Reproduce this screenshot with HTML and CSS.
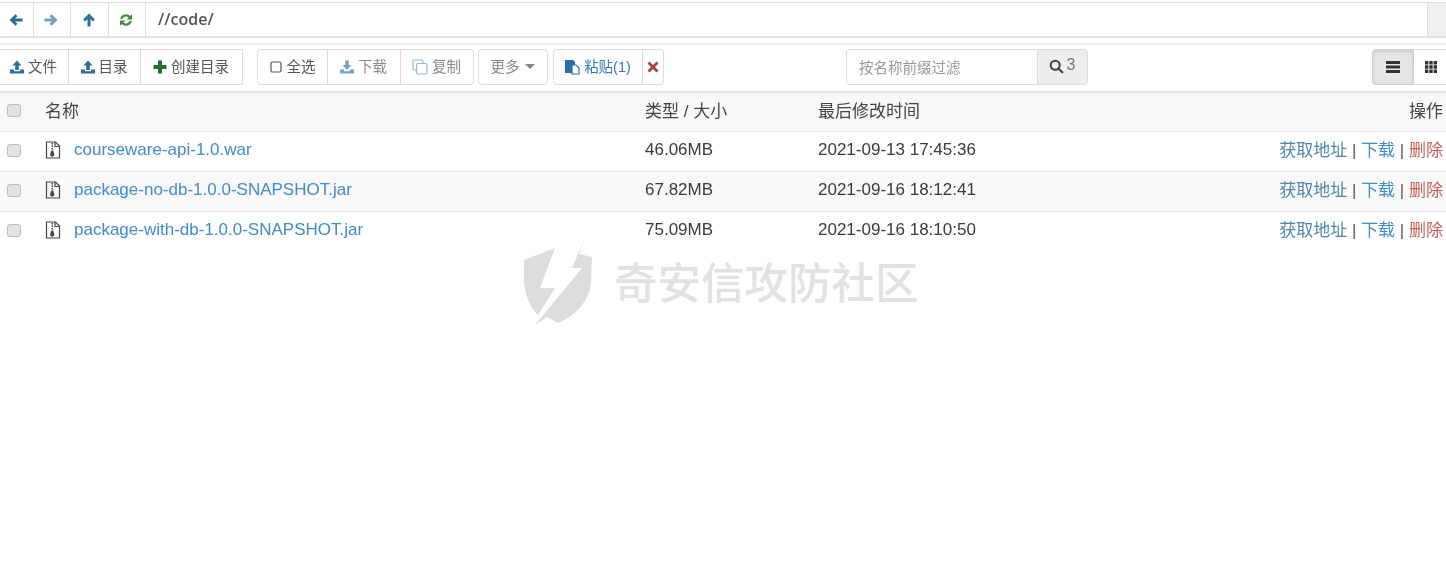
FILE: index.html
```html
<!DOCTYPE html>
<html lang="zh-CN">
<head>
    <meta charset="UTF-8">
    <title>文件管理</title>
    <link rel="stylesheet" href="styles.css">
</head>
<body>
    <div class="address-bar">
        <button class="nav-btn w34"><svg class="icon teal" viewBox="0 0 14 14"><path d="M0.5 7 6.5 1.2 8.5 3.2 6 5.5H13.5V8.5H6L8.5 10.8 6.5 12.8Z"/></svg></button>
        <button class="nav-btn w37"><svg class="icon teal faded" viewBox="0 0 14 14"><path d="M13.5 7 7.5 1.2 5.5 3.2 8 5.5H.5V8.5H8L5.5 10.8 7.5 12.8Z"/></svg></button>
        <button class="nav-btn w38"><svg class="icon teal" viewBox="0 0 14 14"><path d="M7 .5 12.8 6.5 10.8 8.5 8.5 6V13.5H5.5V6L3.2 8.5 1.2 6.5Z"/></svg></button>
        <button class="nav-btn w37"><svg class="icon-refresh" viewBox="0 0 14 14"><path d="M1.2 5.8A6 6 0 0 1 11.2 3L13 1.2V6.6H7.6L9.6 4.6A3.6 3.6 0 0 0 3.6 6ZM12.8 8.2A6 6 0 0 1 2.8 11L1 12.8V7.4H6.4L4.4 9.4A3.6 3.6 0 0 0 10.4 8Z"/></svg></button>
        <div class="path-input">//code/</div>
        <button class="nav-btn go-btn"></button>
    </div>

    <div class="toolbar">
        <div class="btn-group first">
            <button class="btn w70"><svg class="icon teal" viewBox="0 0 14 14"><path d="M7 .5 11.5 5.5H8.8V10H5.2V5.5H2.5ZM0 9.5H4V11.2H10V9.5H14V13.5H0Z"/></svg>文件</button>
            <button class="btn w72"><svg class="icon teal" viewBox="0 0 14 14"><path d="M7 .5 11.5 5.5H8.8V10H5.2V5.5H2.5ZM0 9.5H4V11.2H10V9.5H14V13.5H0Z"/></svg>目录</button>
            <button class="btn w102"><svg class="icon green-dark" viewBox="0 0 14 14"><path d="M5 .5H9V5H13.5V9H9V13.5H5V9H.5V5H5Z"/></svg>创建目录</button>
        </div>
        <div class="btn-group">
            <button class="btn w71"><svg class="icon-check" viewBox="0 0 14 14"><rect x="2" y="2" width="10" height="10" rx="1.5"/></svg>全选</button>
            <button class="btn w73 disabled"><svg class="icon teal-light" viewBox="0 0 14 14"><path d="M5.2 .5H8.8V5H11.5L7 10 2.5 5H5.2ZM0 9.5H4V11.2H10V9.5H14V13.5H0Z"/></svg>下载</button>
            <button class="btn w73 disabled"><svg class="icon-copy" viewBox="0 0 16 16"><rect x="1" y="1" width="10" height="10" rx="1.5"/><rect x="4.5" y="4.5" width="10.5" height="10.5" rx="1.5"/></svg>复制</button>
        </div>
        <div class="btn-group tight">
            <button class="btn w70 disabled">更多<span class="caret"></span></button>
        </div>
        <div class="btn-group gap5">
            <button class="btn w90 paste"><svg class="icon-paste" viewBox="0 0 16 16"><path class="clip" d="M1 1H9L11 3V6H8V14H1Z"/><path class="page" d="M8 6H12L15 9V15H8Z"/></svg>粘贴(1)</button>
            <button class="btn w21 cancel"><svg class="icon red" viewBox="0 0 14 14"><path d="M3.5 1.5 7 5 10.5 1.5 12.5 3.5 9 7 12.5 10.5 10.5 12.5 7 9 3.5 12.5 1.5 10.5 5 7 1.5 3.5Z"/></svg></button>
        </div>
        <div class="search-group">
            <div class="search-input">按名称前缀过滤</div>
            <button class="btn search-btn"><svg class="icon-search" viewBox="0 0 14 14"><circle cx="5.8" cy="5.8" r="4.2"/><path d="M9 9 13 13"/></svg>3</button>
        </div>
        <div class="view-group">
            <button class="btn view-btn active"><svg class="icon dark" viewBox="0 0 14 14"><path d="M0 1H14V4H0ZM0 5.5H14V8.5H0ZM0 10H14V13H0Z"/></svg></button>
            <button class="btn view-btn"><svg class="icon dark" viewBox="0 0 14 14"><path d="M1 1H4.4V4.4H1ZM5.3 1H8.7V4.4H5.3ZM9.6 1H13V4.4H9.6ZM1 5.3H4.4V8.7H1ZM5.3 5.3H8.7V8.7H5.3ZM9.6 5.3H13V8.7H9.6ZM1 9.6H4.4V13H1ZM5.3 9.6H8.7V13H5.3ZM9.6 9.6H13V13H9.6Z"/></svg></button>
        </div>
    </div>

    <div class="row head">
        <span class="check"></span>
        <span class="name">名称</span>
        <span class="size">类型 / 大小</span>
        <span class="time">最后修改时间</span>
        <span class="ops">操作</span>
    </div>
    <div class="row">
        <span class="check"></span>
        <span class="name"><svg class="zip" viewBox="0 0 16 18"><path d="M1.5 1H10.5L14.5 5V17H1.5ZM10 1V5.5H14.5"/><path class="fill" d="M6.5 2H8V3.5H6.5ZM6.5 4.5H8V6H6.5ZM6.5 7H8V8.5H6.5ZM6.3 9.5H8.2L9.4 13.5A2 2 0 0 1 5.1 13.5Z"/></svg><a>courseware-api-1.0.war</a></span>
        <span class="size">46.06MB</span>
        <span class="time">2021-09-13 17:45:36</span>
        <span class="ops"><a class="addr">获取地址</a> | <a>下载</a> | <a class="del">删除</a></span>
    </div>
    <div class="row shaded">
        <span class="check"></span>
        <span class="name"><svg class="zip" viewBox="0 0 16 18"><path d="M1.5 1H10.5L14.5 5V17H1.5ZM10 1V5.5H14.5"/><path class="fill" d="M6.5 2H8V3.5H6.5ZM6.5 4.5H8V6H6.5ZM6.5 7H8V8.5H6.5ZM6.3 9.5H8.2L9.4 13.5A2 2 0 0 1 5.1 13.5Z"/></svg><a>package-no-db-1.0.0-SNAPSHOT.jar</a></span>
        <span class="size">67.82MB</span>
        <span class="time">2021-09-16 18:12:41</span>
        <span class="ops"><a class="addr">获取地址</a> | <a>下载</a> | <a class="del">删除</a></span>
    </div>
    <div class="row last">
        <span class="check"></span>
        <span class="name"><svg class="zip" viewBox="0 0 16 18"><path d="M1.5 1H10.5L14.5 5V17H1.5ZM10 1V5.5H14.5"/><path class="fill" d="M6.5 2H8V3.5H6.5ZM6.5 4.5H8V6H6.5ZM6.5 7H8V8.5H6.5ZM6.3 9.5H8.2L9.4 13.5A2 2 0 0 1 5.1 13.5Z"/></svg><a>package-with-db-1.0.0-SNAPSHOT.jar</a></span>
        <span class="size">75.09MB</span>
        <span class="time">2021-09-16 18:10:50</span>
        <span class="ops"><a class="addr">获取地址</a> | <a>下载</a> | <a class="del">删除</a></span>
    </div>

    <div class="watermark">
        <svg class="shield" viewBox="0 0 70 90"><path d="M1 23 32 11 17 51H32L15 78C5 68 1 55 1 40Z"/><path d="M62 1 56 17 69 20 68 45C67 65 50 80 35 86L24 80 12 88 59 31H49Z"/></svg>
        <span class="wm-text">奇安信攻防社区</span>
    </div>
</body>
</html>
```

FILE: styles.css
```css
* {
    box-sizing: border-box;
}
html, body {
    height: 100%;
    overflow: hidden;
}
body {
    margin: 0;
    background: #fff;
    color: #3a3a3a;
    font-family: "Liberation Sans", "Noto Sans CJK SC", sans-serif;
    font-size: 14px;
    filter: blur(.3px);
}
button {
    font-family: inherit;
    margin: 0;
}
.address-bar {
    display: flex;
    height: 36px;
    margin-top: 2px;
    border-top: 1px solid #ddd;
    border-bottom: 2px solid #e2e2e2;
}
.nav-btn {
    display: flex;
    align-items: center;
    justify-content: center;
    padding: 0 2px 0 0;
    background: #fff;
    border: none;
    border-right: 1px solid #ddd;
}
.w34 { width: 34px; }
.w37 { width: 37px; }
.w38 { width: 38px; }
.path-input {
    flex: 1;
    padding: 5px 0 0 12px;
    color: #555;
    font-family: "Open Sans", sans-serif;
    font-size: 16px;
    font-weight: 600;
    border-right: 1px solid #ddd;
}
.go-btn {
    width: 18px;
    background: #f0f0f0;
    border-right: none;
}
.icon {
    width: 14px;
    height: 14px;
    flex: none;
}
.icon-refresh {
    width: 14px;
    height: 14px;
    fill: #3c8a3c;
}
.teal { fill: #286f93; }
.teal-light { fill: #6fa5cd; }
.faded { opacity: .65; }
.green-dark { fill: #2f6b2f; }
.red { fill: #a94442; }
.dark { fill: #333; }
.toolbar {
    display: flex;
    height: 50px;
    margin-top: 5px;
    padding-top: 4px;
    border-top: 2px solid #eee;
    border-bottom: 2px solid #e2e2e2;
}
.btn-group {
    display: flex;
    height: 36px;
    margin-left: 14px;
}
.btn-group.first {
    margin-left: -1px;
}
.btn-group.gap5 {
    margin-left: 5px;
}
.btn-group.tight {
    margin-left: 4px;
}
.btn {
    display: flex;
    align-items: center;
    justify-content: center;
    gap: 4px;
    height: 36px;
    padding: 0 1px 4px 0;
    color: #555;
    font-size: 14.5px;
    background: #fff;
    border: 1px solid #ddd;
    border-left: none;
}
.btn svg {
    margin-top: 3px;
}
.btn-group .btn:first-child {
    border-left: 1px solid #ddd;
    border-radius: 4px 0 0 4px;
}
.btn-group .btn:last-child {
    border-radius: 0 4px 4px 0;
}
.btn-group .btn:only-child {
    border-radius: 4px;
}
.first .btn:first-child {
    border-radius: 0;
}
.first .btn:last-child {
    border-radius: 0;
}
.w70 { width: 70px; }
.w72 { width: 72px; }
.w73 { width: 73px; }
.w102 { width: 102px; }
.w71 { width: 71px; }
.w90 { width: 90px; }
.w21 { width: 21px; }
.disabled {
    color: #8a8a8a;
}
.paste {
    color: #337ab7;
}
.caret {
    width: 0;
    height: 0;
    margin: 3px 0 0 1px;
    border-top: 5px solid #888;
    border-left: 5px solid transparent;
    border-right: 5px solid transparent;
}
.icon-check {
    width: 14px;
    height: 14px;
    fill: none;
    stroke: #555;
    stroke-width: 1.2;
}
.icon-copy {
    width: 16px;
    height: 16px;
    fill: #fff;
    stroke: #8db8da;
    stroke-width: 1.2;
}
.icon-paste {
    width: 16px;
    height: 16px;
}
.icon-paste .clip {
    fill: #2c6ca8;
}
.icon-paste .page {
    fill: #fff;
    stroke: #2c6ca8;
    stroke-width: 1.2;
}
.search-group {
    display: flex;
    height: 36px;
    margin-left: 182px;
}
.search-input {
    width: 191px;
    padding: 6px 0 0 12px;
    color: #999;
    font-size: 14.5px;
    border: 1px solid #ddd;
    border-right: none;
    border-radius: 4px 0 0 4px;
}
.search-btn {
    width: 51px;
    gap: 3px;
    color: #777;
    font-size: 16px;
    background: #eee;
    border: 1px solid #ddd;
    border-radius: 0 4px 4px 0;
}
.icon-search {
    width: 15px;
    height: 15px;
    fill: none;
    stroke: #444;
    stroke-width: 2;
}
.view-group {
    display: flex;
    height: 36px;
    margin-left: auto;
    margin-right: -4px;
}
.view-btn {
    width: 36px;
    border-left: none;
}
.view-btn.active {
    width: 42px;
    background: #e6e6e6;
    border: 1px solid #ccc;
    border-radius: 4px 0 0 4px;
    box-shadow: inset 0 2px 4px rgba(0, 0, 0, .12);
}
.row {
    display: grid;
    grid-template-columns: 45px 600px 173px 1fr auto;
    align-items: center;
    height: 40px;
    padding: 0 3px 3px 0;
    font-size: 17px;
    border-bottom: 1px solid #e6e6e6;
}
.row.last {
    border-bottom-color: transparent;
}
.row.head {
    height: 39px;
    padding-bottom: 5px;
    background: #f8f8f8;
    color: #444;
}
.shaded {
    background: #f9f9f9;
}
.check {
    justify-self: start;
    width: 14px;
    height: 13px;
    margin-left: 7px;
    background: #e2e2e2;
    border: 1px solid #bbb;
    border-radius: 3px;
}
.head .check {
    margin-top: 1px;
}
.name {
    display: flex;
    align-items: center;
}
.name a, .ops a {
    color: #428bca;
}
.ops a.addr {
    color: #4f86a8;
}
.ops a.del {
    color: #c9605c;
}
.ops {
    margin-bottom: 3px;
    color: #555;
}
.head .ops {
    margin-bottom: 0;
    color: #444;
}
.zip {
    width: 16px;
    height: 18px;
    margin-right: 13px;
    fill: none;
    stroke: #444;
    stroke-width: 1.2;
}
.zip .fill {
    fill: #444;
    stroke: none;
}
.watermark {
    position: absolute;
    left: 523px;
    top: 237px;
    display: flex;
    align-items: center;
    gap: 21px;
    color: #e2e2e2;
    font-family: "Noto Sans CJK SC", sans-serif;
    font-size: 43.5px;
    font-weight: 500;
    line-height: 1;
}
.wm-text {
    margin-bottom: 3px;
}
.shield {
    width: 70px;
    height: 90px;
    fill: #dcdcdc;
}
```
